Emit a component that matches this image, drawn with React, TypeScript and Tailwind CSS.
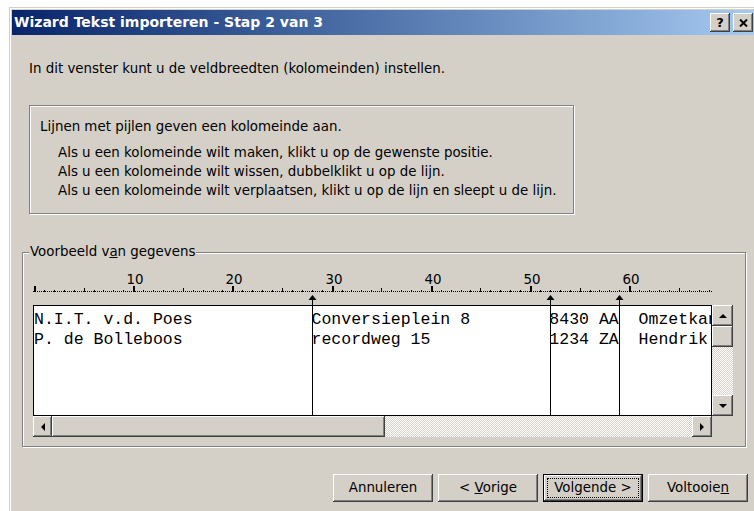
import React from 'react';

// breedte van één teken in het voorbeeldvenster (px)
const CH = 9.92;
const BREAKS = [28, 52, 59];

const ROWS = [
  'N.I.T. v.d. Poes'.padEnd(28) + 'Conversieplein 8'.padEnd(24) + '8430 AA' + '  Omzetkanaal 12',
  'P. de Bolleboos'.padEnd(28) + 'recordweg 15'.padEnd(24) + '1234 ZA' + '  Hendrik Laan 4',
];

const raised =
  'bg-[#d4d0c8] shadow-[inset_-1px_-1px_0_#404040,inset_1px_1px_0_#ffffff,inset_-2px_-2px_0_#808080,inset_2px_2px_0_#d4d0c8]';
const dither =
  'bg-[image:repeating-conic-gradient(#ffffff_0%_25%,#d4d0c8_0%_50%)] bg-[length:2px_2px]';
const etched = 'border border-[#808080] shadow-[inset_1px_1px_0_#ffffff,1px_1px_0_#ffffff]';

function Arrow({ dir }: { dir: 'up' | 'down' | 'left' | 'right' }) {
  const d = {
    up: 'M0 4 L4 0 L8 4 Z',
    down: 'M0 0 L8 0 L4 4 Z',
    left: 'M4 0 L4 8 L0 4 Z',
    right: 'M0 0 L4 4 L0 8 Z',
  }[dir];
  const vertical = dir === 'up' || dir === 'down';
  return (
    <svg width={vertical ? 8 : 4} height={vertical ? 4 : 8} viewBox={vertical ? '0 0 8 4' : '0 0 4 8'}>
      <path d={d} fill="#000" />
    </svg>
  );
}

function ScrollButton({ dir, className = '' }: { dir: 'up' | 'down' | 'left' | 'right'; className?: string }) {
  return (
    <div className={`${raised} flex items-center justify-center ${className}`}>
      <Arrow dir={dir} />
    </div>
  );
}

function Ruler() {
  const marks = [];
  for (let i = 0; i <= 68; i++) {
    const x = Math.round(i * CH) + 1;
    if (i % 10 === 0) {
      marks.push(<rect key={i} x={x} y={14} width={2} height={6} fill="#000" />);
      if (i > 0)
        marks.push(
          <text key={'t' + i} x={x + 2} y={12} textAnchor="middle" fontSize="13.4" fontFamily="DejaVu Sans, sans-serif" fill="#000">
            {i}
          </text>
        );
    } else if (i % 5 === 0) {
      marks.push(<rect key={i} x={x} y={16} width={1} height={4} fill="#000" />);
    } else {
      marks.push(<rect key={i} x={x} y={18} width={1} height={2} fill="#000" />);
    }
  }
  return (
    <svg width={679} height={33} className="block overflow-visible">
      <line x1={0} x2={679} y1={19.5} y2={19.5} stroke="#000" strokeDasharray="1 1" />
      {marks}
      {BREAKS.map((b) => {
        const x = Math.round(b * CH) + 1.5;
        return (
          <g key={b}>
            <path d={`M${x - 4} 28 L${x + 4} 28 L${x} 23 Z`} fill="#000" />
            <line x1={x} x2={x} y1={28} y2={33} stroke="#000" />
          </g>
        );
      })}
    </svg>
  );
}

function Preview() {
  return (
    <div className="grid grid-cols-[679px_21px] grid-rows-[111px_21px]">
      <div className="relative bg-white border border-black overflow-hidden">
        {BREAKS.map((b) => (
          <div key={b} className="absolute top-0 bottom-0 w-px bg-black" style={{ left: Math.round(b * CH) }} />
        ))}
        <pre className="pt-[4px] leading-[20px] whitespace-pre font-['Liberation_Mono','Courier_New',monospace] text-[16.53px] text-black">
          {ROWS.join('\n')}
        </pre>
      </div>
      <div className={`flex flex-col ${dither}`}>
        <ScrollButton dir="up" className="h-[21px]" />
        <div className={`${raised} h-[21px]`} />
        <div className="flex-1" />
        <ScrollButton dir="down" className="h-[21px]" />
      </div>
      <div className={`flex ${dither}`}>
        <ScrollButton dir="left" className="w-[19px]" />
        <div className={`${raised} w-[333px]`} />
        <div className="flex-1" />
        <ScrollButton dir="right" className="w-[20px]" />
      </div>
      <div className="bg-[#d4d0c8]" />
    </div>
  );
}

function Button({ children, isDefault = false }: { children: React.ReactNode; isDefault?: boolean }) {
  if (isDefault) {
    return (
      <div className="w-[100px] h-[28px] border border-black">
        <div className={`${raised} w-full h-full flex p-[3px]`}>
          <span className="flex-1 flex items-center justify-center border border-dotted border-black whitespace-pre">
            {children}
          </span>
        </div>
      </div>
    );
  }
  return (
    <div className={`${raised} w-[100px] h-[28px] flex items-center justify-center`}>
      <span className="whitespace-pre">{children}</span>
    </div>
  );
}

export default function App() {
  return (
    <div className="w-[754px] h-[511px] overflow-hidden bg-white pl-[9px] pt-[7px] font-['DejaVu_Sans','Liberation_Sans',sans-serif] text-[13.4px] text-black">
      <div className="w-[760px] h-[520px] bg-[#d4d0c8] border-l border-t border-[#d4d0c8] shadow-[inset_1px_1px_0_#ffffff] pl-[2px] pt-[2px]">
        {/* titelbalk */}
        <div className="w-[743px] h-[25px] flex items-center justify-between pl-[2px] pr-[2px] bg-linear-to-r from-[#0a246a] to-[#a6caf0]">
          <span className="text-white font-bold text-[14px]">Wizard Tekst importeren - Stap 2 van 3</span>
          <div className="flex gap-[3px]">
            <div className={`${raised} w-[20px] h-[19px] flex items-center justify-center font-bold text-[13px] leading-none`}>?</div>
            <div className={`${raised} w-[20px] h-[19px] flex items-center justify-center`}>
              <svg width="9" height="8" viewBox="0 0 9 8">
                <path d="M1 0.5 L8 7.5 M8 0.5 L1 7.5" stroke="#000" strokeWidth="2" />
              </svg>
            </div>
          </div>
        </div>

        <p className="mt-[26px] ml-[17px] leading-[16px]">In dit venster kunt u de veldbreedten (kolomeinden) instellen.</p>

        <div className={`mt-[28px] ml-[17px] w-[545px] h-[109px] ${etched} pl-[10px] pt-[11px]`}>
          <p className="leading-[19px]">Lijnen met pijlen geven een kolomeinde aan.</p>
          <div className="mt-[7px] ml-[18px] leading-[19px]">
            <p>Als u een kolomeinde wilt maken, klikt u op de gewenste positie.</p>
            <p>Als u een kolomeinde wilt wissen, dubbelklikt u op de lijn.</p>
            <p>Als u een kolomeinde wilt verplaatsen, klikt u op de lijn en sleept u de lijn.</p>
          </div>
        </div>

        <div className={`relative mt-[38px] ml-[10px] w-[724px] h-[195px] ${etched} pl-[10px] pt-[19px]`}>
          <span className="absolute left-[6px] top-[-9px] px-px bg-[#d4d0c8] leading-[16px]">
            Voorbeeld v<u>a</u>n gegevens
          </span>
          <Ruler />
          <Preview />
        </div>

        <div className="mt-[27px] w-[736px] flex justify-end gap-[5px]">
          <Button>Annuleren</Button>
          <Button>
            {'< '}
            <u>V</u>orige
          </Button>
          <Button isDefault>Volgende &gt;</Button>
          <Button>
            Voltooie<u>n</u>
          </Button>
        </div>
      </div>
    </div>
  );
}
